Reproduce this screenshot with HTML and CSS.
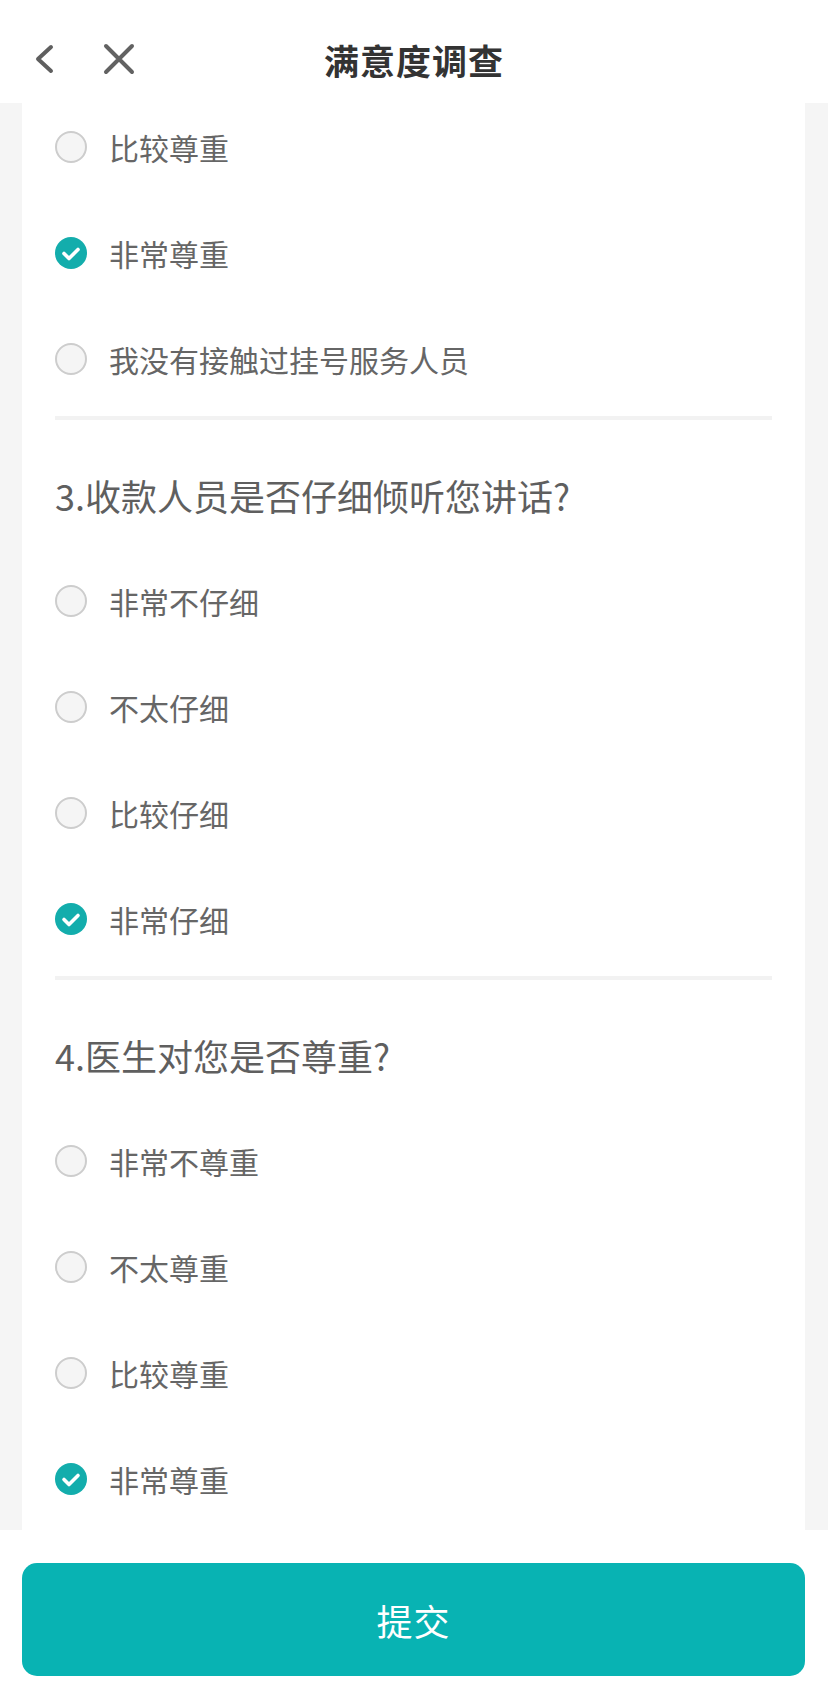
FILE: index.html
```html
<!DOCTYPE html>
<html lang="zh-CN">
<head>
<meta charset="utf-8">
<title>满意度调查</title>
<link rel="stylesheet" href="styles.css">
</head>
<body>
<div class="page">
  <header class="nav">
    <div class="nav-icons">
      <svg class="icon" width="24" height="32" viewBox="0 0 24 32"><path d="M18 4 L5 16 L18 28" fill="none" stroke="#5f5f5f" stroke-width="4" stroke-linecap="round" stroke-linejoin="round"/></svg>
      <svg class="icon icon-x" width="32" height="32" viewBox="0 0 32 32"><path d="M3 3 L29 29 M29 3 L3 29" fill="none" stroke="#626262" stroke-width="4" stroke-linecap="round"/></svg>
    </div>
    <h1 class="nav-title">满意度调查</h1>
  </header>

  <main class="scroll">
    <div class="card">
      <div class="list">
        <div class="option"><span class="radio"></span><span class="label">比较尊重</span></div>
        <div class="option"><span class="radio checked"><svg viewBox="0 0 32 32" width="32" height="32"><path d="M9 16.5 L14 21.5 L23 12.5" fill="none" stroke="#fff" stroke-width="3.6" stroke-linecap="round" stroke-linejoin="round"/></svg></span><span class="label">非常尊重</span></div>
        <div class="option"><span class="radio"></span><span class="label">我没有接触过挂号服务人员</span></div>
        <div class="divider"></div>

        <div class="question">3.收款人员是否仔细倾听您讲话?</div>
        <div class="option"><span class="radio"></span><span class="label">非常不仔细</span></div>
        <div class="option"><span class="radio"></span><span class="label">不太仔细</span></div>
        <div class="option"><span class="radio"></span><span class="label">比较仔细</span></div>
        <div class="option"><span class="radio checked"><svg viewBox="0 0 32 32" width="32" height="32"><path d="M9 16.5 L14 21.5 L23 12.5" fill="none" stroke="#fff" stroke-width="3.6" stroke-linecap="round" stroke-linejoin="round"/></svg></span><span class="label">非常仔细</span></div>
        <div class="divider"></div>

        <div class="question">4.医生对您是否尊重?</div>
        <div class="option"><span class="radio"></span><span class="label">非常不尊重</span></div>
        <div class="option"><span class="radio"></span><span class="label">不太尊重</span></div>
        <div class="option"><span class="radio"></span><span class="label">比较尊重</span></div>
        <div class="option"><span class="radio checked"><svg viewBox="0 0 32 32" width="32" height="32"><path d="M9 16.5 L14 21.5 L23 12.5" fill="none" stroke="#fff" stroke-width="3.6" stroke-linecap="round" stroke-linejoin="round"/></svg></span><span class="label">非常尊重</span></div>
      </div>
    </div>
  </main>

  <footer class="footer">
    <button class="submit">提交</button>
  </footer>
</div>
</body>
</html>
```

FILE: styles.css
```css
* { box-sizing: border-box; }
html, body {
  margin: 0;
  padding: 0;
  background: #ffffff;
  font-family: "Noto Sans CJK SC", "Noto Sans", sans-serif;
}
.page {
  width: 828px;
  height: 1681px;
  display: flex;
  flex-direction: column;
  overflow: hidden;
}
.nav {
  height: 103px;
  flex: none;
  display: flex;
  align-items: center;
  justify-content: center;
  position: relative;
  background: #fff;
}
.nav-icons {
  position: absolute;
  left: 33px;
  top: 43px;
  display: flex;
  align-items: center;
  gap: 46px;
}
.icon { display: block; }
.nav-title {
  margin: 0;
  font-size: 35px;
  font-weight: 700;
  color: #333;
  line-height: 1;
  letter-spacing: 1px;
  padding-top: 16px;
}
.scroll {
  height: 1427px;
  flex: none;
  background: #f5f5f5;
  padding: 0 23px 0 22px;
}
.card {
  height: 100%;
  background: #fff;
  overflow: hidden;
  padding: 0 33px;
}
.list {
  margin-top: -9px;
}
.option {
  height: 106px;
  display: flex;
  align-items: center;
}
.radio {
  width: 32px;
  height: 32px;
  border-radius: 50%;
  border: 2px solid #cdcdcd;
  background: #f5f5f5;
  flex: none;
  display: flex;
  align-items: center;
  justify-content: center;
}
.radio.checked {
  background: #13adac;
  border: none;
}
.radio svg { display: block; }
.label {
  margin-left: 22px;
  font-size: 30px;
  color: #666;
  line-height: 1;
}
.divider {
  height: 4px;
  background: #f2f2f2;
  margin-top: 4px;
}
.question {
  padding-top: 50px;
  padding-bottom: 28px;
  line-height: 50px;
  font-size: 36px;
  color: #5f5f5f;
}
.footer {
  flex: 1;
  background: #fff;
  padding: 33px 23px 0 22px;
}
.submit {
  width: 100%;
  height: 113px;
  border: none;
  border-radius: 15px;
  background: #08b3b3;
  color: #fff;
  font-family: "Noto Sans CJK SC", "Noto Sans", sans-serif;
  font-size: 36px;
  letter-spacing: 1px;
  padding: 0;
}
```
